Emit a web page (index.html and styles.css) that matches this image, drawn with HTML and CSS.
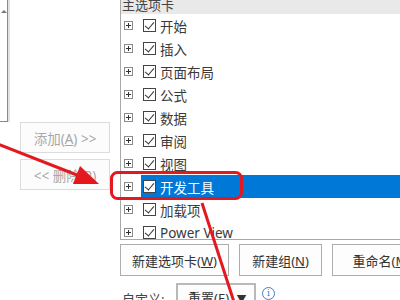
FILE: index.html
```html
<!DOCTYPE html>
<html lang="zh-CN">
<head>
  <meta charset="UTF-8">
  <meta name="viewport" content="width=device-width, initial-scale=1.0">
  <title>自定义功能区</title>
  <link rel="stylesheet" href="styles.css">
</head>
<body>
  <div class="window">
    <div class="left-col">
      <div class="src-list"><span class="scroll-up"></span></div>
      <button class="move-btn" disabled>添加(<u>A</u>) &gt;&gt;</button>
      <button class="move-btn second" disabled>&lt;&lt; 删除(<u>R</u>)</button>
    </div>

    <div class="right-col">
      <div class="tabs-list">
        <div class="tabs-head">主选项卡</div>
        <div class="tab-row"><span class="expander"></span><span class="tab-label"><span class="check"></span>开始</span></div>
        <div class="tab-row"><span class="expander"></span><span class="tab-label"><span class="check"></span>插入</span></div>
        <div class="tab-row"><span class="expander"></span><span class="tab-label"><span class="check"></span>页面布局</span></div>
        <div class="tab-row"><span class="expander"></span><span class="tab-label"><span class="check"></span>公式</span></div>
        <div class="tab-row"><span class="expander"></span><span class="tab-label"><span class="check"></span>数据</span></div>
        <div class="tab-row"><span class="expander"></span><span class="tab-label"><span class="check"></span>审阅</span></div>
        <div class="tab-row"><span class="expander"></span><span class="tab-label"><span class="check"></span>视图</span></div>
        <div class="tab-row selected"><span class="expander"></span><span class="tab-label"><span class="check"></span>开发工具</span></div>
        <div class="tab-row"><span class="expander"></span><span class="tab-label"><span class="check"></span>加载项</span></div>
        <div class="tab-row"><span class="expander"></span><span class="tab-label"><span class="check"></span>Power View</span></div>
      </div>

      <div class="action-row">
        <button class="act-btn wide">新建选项卡(<u>W</u>)</button>
        <button class="act-btn mid">新建组(<u>N</u>)</button>
        <button class="act-btn">重命名(<u>M</u>)...</button>
      </div>

      <div class="custom-row">
        <span class="custom-label">自定义:</span>
        <button class="combo">重置(<u>E</u>) <span class="caret">▼</span></button>
        <span class="info">i</span>
      </div>
    </div>

    <!-- red marks drawn over the dialog -->
    <svg class="annot" width="400" height="300" viewBox="0 0 400 300">
      <rect x="111.5" y="172.5" width="130" height="26" rx="6" fill="none" stroke="#e3191f" stroke-width="3"/>
      <line x1="-2" y1="144" x2="82" y2="177" stroke="#e3191f" stroke-width="3"/>
      <polygon points="99,184 80,166 73,184" fill="#e3191f"/>
      <line x1="202" y1="203" x2="234" y2="302" stroke="#e3191f" stroke-width="3"/>
    </svg>
  </div>
</body>
</html>
```

FILE: styles.css
```css
body {
  margin: 0;
  overflow: hidden;
  background: #fff;
  font-family: "Noto Sans", "Noto Sans CJK SC", sans-serif;
  font-size: 13px;
  color: #3a3a3a;
}
.window {
  position: relative;
  display: flex;
  width: 400px;
  height: 300px;
  overflow: hidden;
}
u {
  text-decoration: underline;
}

/* left side: source list + add/remove */
.left-col {
  width: 120px;
  flex: none;
  display: flex;
  flex-direction: column;
}
.left-col > * {
  flex: none;
}
.src-list {
  width: 7px;
  height: 121px;
  border-right: 1px solid #8a8a8a;
  border-bottom: 1px solid #8a8a8a;
  box-shadow: 2px 0 0 #e2e2e2;
}
.scroll-up {
  display: block;
  margin: 10px 0 0 1px;
  width: 0;
  height: 0;
  border-left: 3px solid transparent;
  border-right: 3px solid transparent;
  border-bottom: 3px solid #777;
}
.move-btn {
  margin-left: 20px;
  width: 90px;
  height: 31px;
  padding: 0;
  font: inherit;
  font-size: 13.5px;
  color: #a8a8a8;
  background: #fcfcfc;
  border: 1px solid #dcdcdc;
}
.move-btn.second {
  margin-top: 6px;
}

/* right side: main tabs tree */
.right-col {
  width: 280px;
  flex: none;
  display: flex;
  flex-direction: column;
}
.right-col > * {
  flex: none;
}
.tabs-list {
  box-sizing: border-box;
  height: 240px;
  border: 1px solid #a9a9a9;
  border-top: none;
  border-right: none;
  overflow: hidden;
}
.tabs-head {
  height: 14px;
  line-height: 11px;
  padding-left: 1px;
  background: #e9e9e9;
  color: #444;
  overflow: hidden;
}
.tab-row {
  display: flex;
  align-items: center;
  height: 23px;
}
.expander {
  position: relative;
  box-sizing: border-box;
  width: 9px;
  height: 9px;
  margin: 0 8px 0 3px;
  border: 1px solid #8a8a8a;
  background: #fff;
}
.expander::before,
.expander::after {
  content: "";
  position: absolute;
  background: #333;
}
.expander::before {
  left: 1px;
  top: 3px;
  width: 5px;
  height: 1px;
}
.expander::after {
  left: 3px;
  top: 1px;
  width: 1px;
  height: 5px;
}
.tab-label {
  flex: 1;
  display: flex;
  align-items: center;
  height: 23px;
  padding-left: 2px;
  font-size: 13.5px;
  white-space: nowrap;
}
.check {
  position: relative;
  box-sizing: border-box;
  width: 13px;
  height: 13px;
  margin-right: 4px;
  border: 1px solid #444;
  background: #fff;
}
.check::after {
  content: "";
  position: absolute;
  left: 3px;
  top: 0px;
  width: 4px;
  height: 8px;
  border-right: 1.5px solid #333;
  border-bottom: 1.5px solid #333;
  transform: rotate(40deg);
}
.tab-row.selected .tab-label {
  background: #0078d7;
  color: #fff;
}

/* buttons under the tree */
.action-row {
  display: flex;
  gap: 10px;
  margin-top: 4px;
}
.act-btn {
  flex: none;
  width: 110px;
  height: 32px;
  padding: 0;
  font: inherit;
  color: #333;
  background: #fdfdfd;
  border: 1px solid #adadad;
  white-space: nowrap;
}
.act-btn.wide {
  width: 109px;
}
.act-btn.mid {
  width: 83px;
}

.custom-row {
  display: flex;
  align-items: flex-start;
  margin-top: 7px;
  padding-left: 2px;
}
.custom-label {
  width: 54px;
  padding-top: 6px;
  color: #444;
}
.combo {
  width: 80px;
  height: 28px;
  padding: 0 0 0 10px;
  text-align: left;
  font: inherit;
  color: #333;
  background: #fdfdfd;
  border: 2px solid #b9b9b9;
}
.caret {
  font-size: 10px;
  margin-left: 4px;
}
.info {
  box-sizing: border-box;
  width: 13px;
  height: 13px;
  margin: 4px 0 0 6px;
  border: 1px solid #3b7fd0;
  border-radius: 50%;
  color: #3b7fd0;
  font-size: 9px;
  line-height: 11px;
  text-align: center;
  font-family: "DejaVu Serif", serif;
}

.annot {
  position: absolute;
  left: 0;
  top: 0;
  pointer-events: none;
}
```
